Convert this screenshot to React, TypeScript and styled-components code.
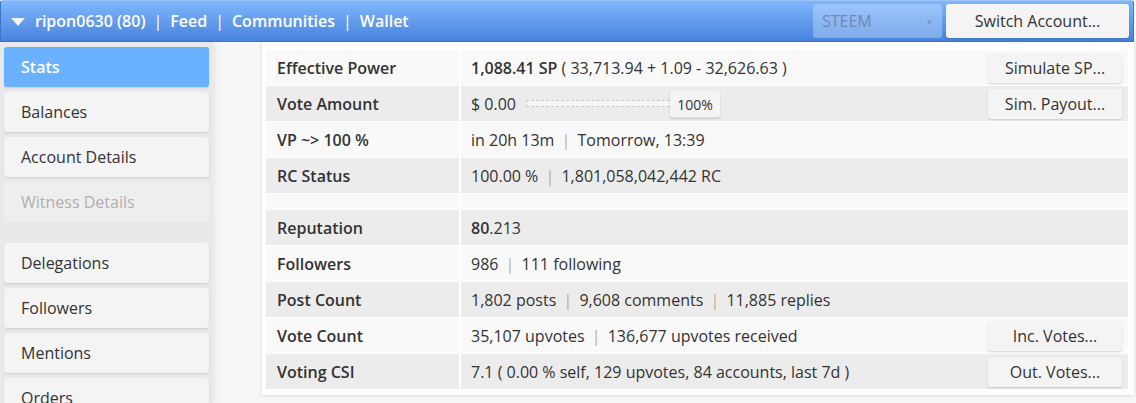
import React from 'react';
import styled, { createGlobalStyle } from 'styled-components';

const GlobalStyle = createGlobalStyle`
  html, body {
    margin: 0;
    padding: 0;
    background: #f7f7f7;
    font-family: "Open Sans", "Liberation Sans", sans-serif;
    color: #333;
  }
  * { box-sizing: border-box; }
`;

type Stat = {
  label: string;
  value?: React.ReactNode;
  action?: string;
  spacer?: boolean;
};

const menu = [
  { name: 'Stats', active: true },
  { name: 'Balances' },
  { name: 'Account Details' },
  { name: 'Witness Details', disabled: true, groupEnd: true },
  { name: 'Delegations' },
  { name: 'Followers' },
  { name: 'Mentions' },
  { name: 'Orders' },
];

const Sep = () => <Pipe>|</Pipe>;

// built lazily so the styled parts below exist by then
const getStats = (): Stat[] => [
  {
    label: 'Effective Power',
    value: (
      <>
        <b>1,088.41 SP</b>&nbsp;( 33,713.94 + 1.09 - 32,626.63 )
      </>
    ),
    action: 'Simulate SP...',
  },
  {
    label: 'Vote Amount',
    value: (
      <SliderRow>
        $ 0.00
        <Track>
          <Thumb>100%</Thumb>
        </Track>
      </SliderRow>
    ),
    action: 'Sim. Payout...',
  },
  {
    label: 'VP ~> 100 %',
    value: (
      <>
        in 20h 13m <Sep /> Tomorrow, 13:39
      </>
    ),
  },
  {
    label: 'RC Status',
    value: (
      <>
        100.00 % <Sep /> 1,801,058,042,442 RC
      </>
    ),
  },
  { label: '', spacer: true },
  {
    label: 'Reputation',
    value: (
      <>
        <b>80</b>.213
      </>
    ),
  },
  {
    label: 'Followers',
    value: (
      <>
        986 <Sep /> 111 following
      </>
    ),
  },
  {
    label: 'Post Count',
    value: (
      <>
        1,802 posts <Sep /> 9,608 comments <Sep /> 11,885 replies
      </>
    ),
  },
  {
    label: 'Vote Count',
    value: (
      <>
        35,107 upvotes <Sep /> 136,677 upvotes received
      </>
    ),
    action: 'Inc. Votes...',
  },
  {
    label: 'Voting CSI',
    value: <>7.1 ( 0.00 % self, 129 upvotes, 84 accounts, last 7d )</>,
    action: 'Out. Votes...',
  },
];

export default function App() {
  const stats = getStats();
  return (
    <Page>
      <GlobalStyle />
      <Header>
        <NavLinks>
          <Caret />
          <NavLink>ripon0630 (80)</NavLink>
          <NavSep>|</NavSep>
          <NavLink>Feed</NavLink>
          <NavSep>|</NavSep>
          <NavLink>Communities</NavLink>
          <NavSep>|</NavSep>
          <NavLink>Wallet</NavLink>
        </NavLinks>
        <HeaderRight>
          <ChainSelect>
            STEEM
            <SmallCaret>▾</SmallCaret>
          </ChainSelect>
          <SwitchButton>Switch Account...</SwitchButton>
        </HeaderRight>
      </Header>
      <Main>
        <Sidebar>
          {menu.map(item => (
            <MenuItem
              key={item.name}
              $active={item.active}
              $disabled={item.disabled}
              $groupEnd={item.groupEnd}
            >
              {item.name}
            </MenuItem>
          ))}
        </Sidebar>
        <Panel>
          {stats.map((row, i) => (
            <Row key={i} $spacer={row.spacer}>
              <LabelCell>{row.label}</LabelCell>
              <ValueCell>
                <span>{row.value}</span>
                {row.action && <ActionButton>{row.action}</ActionButton>}
              </ValueCell>
            </Row>
          ))}
        </Panel>
      </Main>
    </Page>
  );
}

const Page = styled.div`
  width: 1136px;
  height: 403px;
  overflow: hidden;
`;

const Header = styled.div`
  height: 42px;
  width: 1134px;
  display: flex;
  align-items: center;
  justify-content: space-between;
  padding: 0 4px 0 10px;
  background: linear-gradient(#80b6fb, #4883de);
  border: 1px solid #3f74cc;
  border-top-color: #9cc4fb;
  border-radius: 3px 3px 0 0;
`;

const NavLinks = styled.div`
  display: flex;
  align-items: center;
  color: #fff;
  font-size: 16px;
  font-weight: 600;
`;

const Caret = styled.span`
  width: 0;
  height: 0;
  border-left: 7px solid transparent;
  border-right: 7px solid transparent;
  border-top: 8px solid #f4f4f4;
  margin: 2px 10px 0 0;
`;

const NavLink = styled.span`
  color: #fff;
`;

const NavSep = styled.span`
  margin: 0 8px;
  font-weight: 400;
`;

const HeaderRight = styled.div`
  display: flex;
  align-items: center;
  gap: 4px;
`;

const ChainSelect = styled.div`
  width: 129px;
  height: 34px;
  display: flex;
  align-items: center;
  justify-content: space-between;
  padding: 0 10px 0 9px;
  background: rgba(205, 225, 252, 0.4);
  border-radius: 3px;
  color: #6d89b8;
  font-size: 16px;
`;

const SmallCaret = styled.span`
  font-size: 9px;
  color: #7b93bb;
`;

const SwitchButton = styled.div`
  width: 183px;
  height: 34px;
  display: flex;
  align-items: center;
  justify-content: center;
  background: #f4f4f4;
  border-radius: 3px;
  color: #333;
  font-size: 16px;
  box-shadow: 0 1px 2px rgba(0, 0, 0, 0.15);
`;

const Main = styled.div`
  display: flex;
  align-items: flex-start;
`;

const Sidebar = styled.div`
  width: 213px;
  height: 361px;
  padding: 5px 4px 0 4px;
  background: #e9e9e9;
  box-shadow: 3px 0 6px rgba(0, 0, 0, 0.06);
  display: flex;
  flex-direction: column;
  gap: 5px;
`;

const MenuItem = styled.div<{
  $active?: boolean;
  $disabled?: boolean;
  $groupEnd?: boolean;
}>`
  height: 40px;
  flex-shrink: 0;
  display: flex;
  align-items: center;
  padding-left: 17px;
  padding-bottom: 1px;
  border-radius: 3px;
  font-size: 16px;
  font-weight: ${p => (p.$active ? 600 : 400)};
  background: ${p => (p.$active ? '#6ab1ff' : p.$disabled ? '#eeeeee' : '#f4f4f4')};
  color: ${p => (p.$active ? '#fff' : p.$disabled ? '#b0b0b0' : '#333')};
  box-shadow: ${p => (p.$disabled ? 'none' : '0 1px 2px rgba(0, 0, 0, 0.12)')};
  margin-bottom: ${p => (p.$groupEnd ? '16px' : '0')};
`;

const Panel = styled.div`
  margin-left: 49px;
  width: 872px;
  padding: 8px 6px 6px 4px;
  background: #fff;
  box-shadow: 0 1px 4px rgba(0, 0, 0, 0.12);
  display: flex;
  flex-direction: column;
  gap: 1px;
`;

const Row = styled.div<{ $spacer?: boolean }>`
  display: grid;
  grid-template-columns: 193px 1fr;
  column-gap: 2px;
  height: ${p => (p.$spacer ? '15px' : '35px')};

  &:nth-child(odd) > div {
    background: #f9f9f9;
  }
  &:nth-child(even) > div {
    background: #ececec;
  }
`;

const LabelCell = styled.div`
  display: flex;
  align-items: center;
  padding-left: 11px;
  font-size: 16px;
  font-weight: 600;
  color: #333;
`;

const ValueCell = styled.div`
  display: flex;
  align-items: center;
  justify-content: space-between;
  padding: 0 6px 0 10px;
  font-size: 16px;
  color: #333;
  white-space: nowrap;

  b {
    font-weight: 600;
  }
`;

const Pipe = styled.span`
  color: #b9aca0;
  margin: 0 3px;
`;

const ActionButton = styled.div`
  width: 134px;
  height: 30px;
  display: flex;
  align-items: center;
  justify-content: center;
  background: #f4f4f4;
  border-radius: 3px;
  font-size: 16px;
  color: #333;
  box-shadow: 0 1px 2px rgba(0, 0, 0, 0.15);
`;

const SliderRow = styled.span`
  display: inline-flex;
  align-items: center;
`;

const Track = styled.span`
  position: relative;
  display: inline-block;
  width: 194px;
  height: 7px;
  margin-left: 10px;
  border: 1px dashed #c8c8c8;
  background: #f6f6f6;
`;

const Thumb = styled.span`
  position: absolute;
  left: 143px;
  top: 50%;
  transform: translateY(-50%);
  width: 50px;
  height: 27px;
  display: flex;
  align-items: center;
  justify-content: center;
  background: #f4f4f4;
  border-radius: 3px;
  font-size: 14px;
  color: #333;
  box-shadow: 0 1px 2px rgba(0, 0, 0, 0.15);
`;
